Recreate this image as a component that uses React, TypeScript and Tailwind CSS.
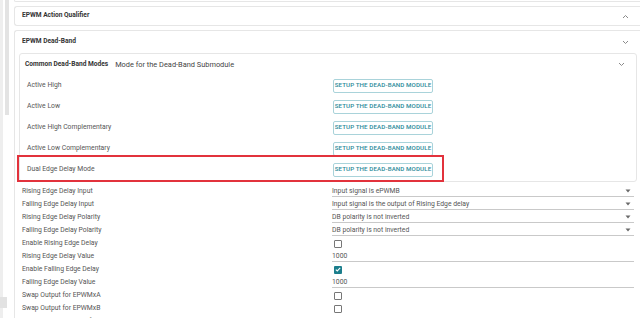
import { ReactNode } from 'react';

const font = { fontFamily: 'Roboto, "Noto Sans", Arial, sans-serif' };

function Chevron({ up = false }: { up?: boolean }) {
    return (
        <svg width="7" height="5" viewBox="0 0 7 5" className="shrink-0">
            <path
                d={up ? 'M1 4 L3.5 1.5 L6 4' : 'M1 1 L3.5 3.5 L6 1'}
                fill="none"
                stroke="#8a8a8a"
                strokeWidth="1"
            />
        </svg>
    );
}

function SetupButton() {
    return (
        <button className="h-[14px] w-[100px] rounded-[2px] border border-[#a9d3da] bg-white text-[6.2px] font-medium tracking-[0.1px] text-[#2a8a99] leading-none">
            SETUP THE DEAD-BAND MODULE
        </button>
    );
}

function Select({ value }: { value: string }) {
    return (
        <div className="flex h-[11px] w-[302px] items-center justify-between border-b border-[#c9c9c9] pr-[3px]">
            <span className="text-[6.8px] leading-none text-[#555]">{value}</span>
            <svg width="6" height="4" viewBox="0 0 6 4">
                <path d="M0.5 0.5 L5.5 0.5 L3 3.5 Z" fill="#6a6a6a" />
            </svg>
        </div>
    );
}

function TextInput({ value }: { value: string }) {
    return (
        <div className="flex h-[11px] w-[302px] items-center border-b border-[#c9c9c9]">
            <span className="text-[6.8px] leading-none text-[#555]">{value}</span>
        </div>
    );
}

function Checkbox({ checked = false }: { checked?: boolean }) {
    if (checked) {
        return (
            <div className="ml-[2px] flex h-[8px] w-[8px] items-center justify-center rounded-[1px] bg-[#1b7e8c]">
                <svg width="6" height="5" viewBox="0 0 6 5">
                    <path d="M0.8 2.6 L2.3 4 L5.2 0.9" fill="none" stroke="white" strokeWidth="1.1" />
                </svg>
            </div>
        );
    }
    return <div className="ml-[2px] h-[8px] w-[8px] rounded-[1px] border border-[#777]" />;
}

function FormRow({ label, children }: { label: string; children: ReactNode }) {
    return (
        <div className="flex h-[13px] shrink-0 items-center">
            <div className="w-[310px] shrink-0 text-[6.8px] leading-none text-[#555]">{label}</div>
            {children}
        </div>
    );
}

const modes = [
    'Active High',
    'Active Low',
    'Active High Complementary',
    'Active Low Complementary',
    'Dual Edge Delay Mode',
];

export default function App() {
    return (
        <div className="relative flex h-[318px] w-[640px] items-start overflow-hidden bg-white" style={font}>
            {/* left gutter with scroll track */}
            <div className="relative flex h-[318px] w-[14px] shrink-0">
                <div className="h-full w-[3px] bg-[#eeeeee]" />
                <div className="ml-[2px] h-[115px] w-[4px] bg-[#e3e3e3]" />
                <div className="absolute left-0 top-[297px] h-[11px] w-[7px] bg-[#e2e2e2]" />
            </div>

            <div className="flex min-w-0 flex-1 flex-col">
                {/* tail of the card above */}
                <div className="h-[2px] shrink-0 rounded-bl-[3px] border-b border-l border-[#e6e6e6]" />

                {/* EPWM Action Qualifier */}
                <div className="mt-[4px] flex h-[20px] shrink-0 items-center justify-between rounded-l-[3px] border border-r-0 border-[#e6e6e6] pl-[7px] pr-[11px]">
                    <span className="text-[6.6px] font-bold text-[#333]">EPWM Action Qualifier</span>
                    <Chevron up />
                </div>

                {/* EPWM Dead-Band */}
                <div className="mt-[4px] flex shrink-0 flex-col rounded-l-[3px] border border-r-0 border-[#e6e6e6]">
                    <div className="flex h-[22px] shrink-0 items-center justify-between pl-[7px] pr-[11px]">
                        <span className="text-[6.6px] font-bold text-[#333]">EPWM Dead-Band</span>
                        <Chevron />
                    </div>

                    {/* Common Dead-Band Modes */}
                    <div className="ml-[4px] mr-[3px] flex shrink-0 flex-col rounded-[3px] border border-[#e6e6e6] pb-[1px]">
                        <div className="flex h-[21px] shrink-0 items-center justify-between pl-[5px] pr-[11px]">
                            <div className="flex items-center gap-[7px]">
                                <span className="text-[6.6px] font-bold text-[#333]">Common Dead-Band Modes</span>
                                <span className="text-[7.4px] text-[#444]">Mode for the Dead-Band Submodule</span>
                            </div>
                            <Chevron />
                        </div>
                        {modes.map((m) => (
                            <div key={m} className="flex h-[21px] shrink-0 items-center pl-[7px]">
                                <div className="w-[306px] shrink-0 text-[6.8px] text-[#555]">{m}</div>
                                <SetupButton />
                            </div>
                        ))}
                    </div>

                    {/* settings */}
                    <div className="mt-[3px] flex shrink-0 flex-col pl-[7px]">
                        <FormRow label="Rising Edge Delay Input">
                            <Select value="Input signal is ePWMB" />
                        </FormRow>
                        <FormRow label="Falling Edge Delay Input">
                            <Select value="Input signal is the output of Rising Edge delay" />
                        </FormRow>
                        <FormRow label="Rising Edge Delay Polarity">
                            <Select value="DB polarity is not inverted" />
                        </FormRow>
                        <FormRow label="Falling Edge Delay Polarity">
                            <Select value="DB polarity is not inverted" />
                        </FormRow>
                        <FormRow label="Enable Rising Edge Delay">
                            <Checkbox />
                        </FormRow>
                        <FormRow label="Rising Edge Delay Value">
                            <TextInput value="1000" />
                        </FormRow>
                        <FormRow label="Enable Falling Edge Delay">
                            <Checkbox checked />
                        </FormRow>
                        <FormRow label="Falling Edge Delay Value">
                            <TextInput value="1000" />
                        </FormRow>
                        <FormRow label="Swap Output for EPWMxA">
                            <Checkbox />
                        </FormRow>
                        <FormRow label="Swap Output for EPWMxB">
                            <Checkbox />
                        </FormRow>
                        <FormRow label="Enable Dead-Band Half Cycle Clocking">
                            <Checkbox />
                        </FormRow>
                    </div>
                </div>
            </div>

            {/* annotation highlight */}
            <div className="pointer-events-none absolute left-[17px] top-[155px] h-[27px] w-[427px] border-2 border-[#e2323c]" />
        </div>
    );
}
